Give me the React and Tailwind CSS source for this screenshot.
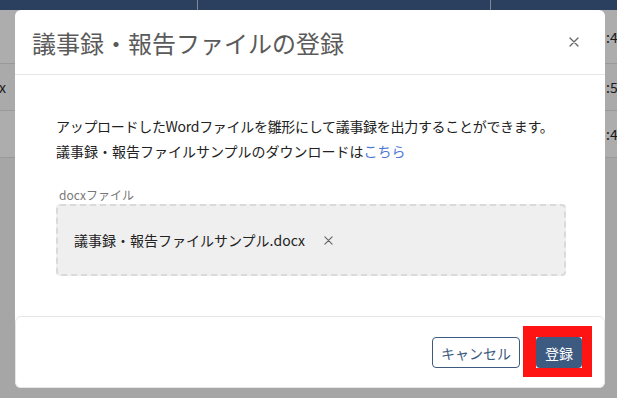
import React from 'react';

const font = { fontFamily: "'Noto Sans CJK JP', 'Noto Sans', sans-serif" };

/* ───────── background table (dimmed behind the modal) ───────── */
const rows = [
  { h: 'h-[54px]', bg: 'bg-[#adadad]', left: '', right: ':4' },
  { h: 'h-[47px]', bg: 'bg-[#aaaaaa]', left: 'x', right: ':5' },
  { h: 'h-[47px]', bg: 'bg-[#adadad]', left: '', right: ':4' },
];

const CloseIcon = ({ className }) => (
  <svg className={className} viewBox="0 0 10 10" fill="none">
    <path d="M1 1l8 8M9 1l-8 8" stroke="currentColor" strokeWidth="1.3" strokeLinecap="round" />
  </svg>
);

export default function App() {
  return (
    <div className="relative w-[617px] h-[398px] overflow-hidden bg-[#a6a6a6] text-[14px]" style={font}>
      {/* table header */}
      <div className="grid grid-cols-[197px_293px_127px] h-[10px] bg-[#2b405e]">
        <div />
        <div className="border-l border-[#7f8a99]" />
        <div className="border-l border-[#7f8a99]" />
      </div>

      {/* table rows */}
      {rows.map((r, i) => (
        <div key={i} className={`flex items-center justify-between ${r.h} ${r.bg} border-b border-[#999999] text-[#1a1a1a]`}>
          <span className="-ml-[1px] leading-none">{r.left}</span>
          <span className="w-[11px] leading-none">{r.right}</span>
        </div>
      ))}

      {/* modal */}
      <div className="absolute left-[15px] top-[10px] w-[590px] h-[378px] bg-white rounded-[6px] overflow-hidden flex flex-col">
        {/* header */}
        <div className="h-[65px] flex items-center justify-between pl-[17px] pr-[26px] border-b border-[#e6e6e6] shrink-0">
          <h1 className="text-[24px] leading-none text-[#5a5a5a] font-normal mt-[1px]">議事録・報告ファイルの登録</h1>
          <CloseIcon className="w-[10px] h-[10px] text-[#666666]" />
        </div>

        {/* body */}
        <div className="flex-1 px-[41px] pt-[39px] text-[#222222]">
          <p className="leading-[25px] whitespace-nowrap tracking-[-0.3px]">
            アップロードしたWordファイルを雛形にして議事録を出力することができます。
          </p>
          <p className="leading-[25px] whitespace-nowrap">
            議事録・報告ファイルサンプルのダウンロードは<span className="text-[#4f78d6]">こちら</span>
          </p>

          <div className="mt-[23px] pl-[3px] text-[12px] leading-[16px] text-[#777777]">docxファイル</div>
          <div className="mt-[1px] h-[72px] w-[510px] rounded-[4px] border-2 border-dashed border-[#dadada] bg-[#efefef] flex items-center pl-[16px]">
            <span className="text-[#222222]">議事録・報告ファイルサンプル.docx</span>
            <CloseIcon className="ml-[19px] w-[9px] h-[9px] text-[#666666]" />
          </div>
        </div>

        {/* footer */}
        <div className="h-[72px] shrink-0 border border-[#e6e6e6] rounded-[6px] flex items-start justify-end gap-[16px] pt-[20px] pr-[22px]">
          <button className="h-[31px] w-[88px] rounded-[4px] border border-[#3d5a80] text-[#3d5a80] text-[14px] leading-none bg-white">
            キャンセル
          </button>
          <div className="relative">
            <button className="h-[31px] w-[46px] rounded-[4px] bg-[#3d5a80] text-white text-[14px] leading-none">
              登録
            </button>
            {/* red highlight annotation */}
            <div className="absolute -left-[13px] -top-[11px] -right-[10px] -bottom-[9px] border-l-[13px] border-t-[11px] border-r-[10px] border-b-[9px] border-[#ff1414]" />
          </div>
        </div>
      </div>
    </div>
  );
}
